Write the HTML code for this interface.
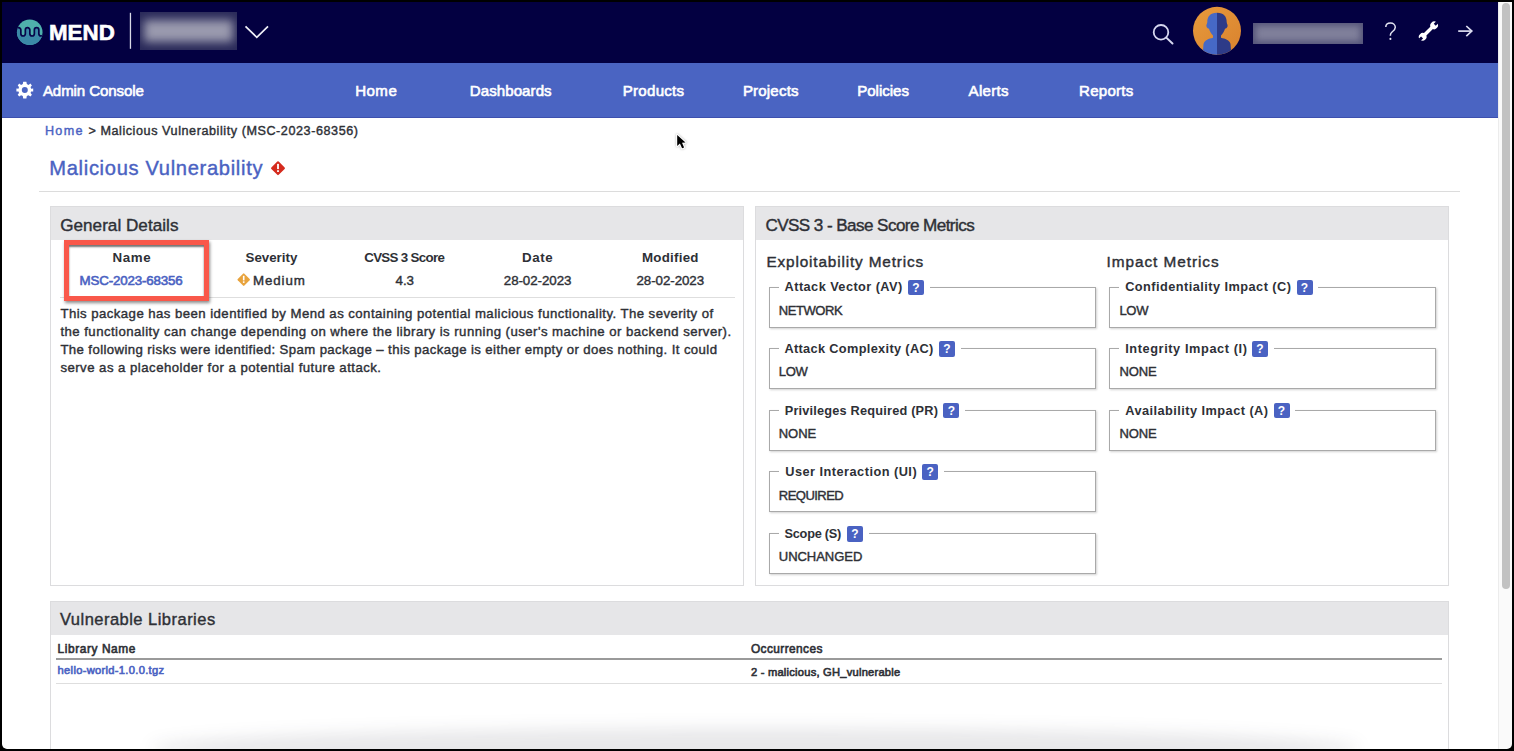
<!DOCTYPE html>
<html><head><meta charset="utf-8"><title>Malicious Vulnerability</title>
<style>
html,body{margin:0;padding:0;width:1514px;height:751px;overflow:hidden;background:#000;}
body{font-family:"Liberation Sans",sans-serif;position:relative;}
.win{position:absolute;left:2px;top:2px;width:1510px;height:747px;background:#fff;overflow:hidden;border-radius:0 0 4px 4px;}
.abs{position:absolute;}
.t{position:absolute;white-space:nowrap;line-height:1;font-family:"Liberation Sans",sans-serif;}
.hdr{position:absolute;left:0;top:0;width:1496px;height:61px;background:#030041;}
.nav{position:absolute;left:0;top:61px;width:1496px;height:55px;background:#4a64c2;box-sizing:border-box;border-bottom:1px solid #3d50ae;}
.sb{position:absolute;left:1496px;top:0;width:14px;height:747px;background:#fafafa;border-left:1px solid #ececec;box-sizing:border-box;}
.thumb{position:absolute;left:1500px;top:1px;width:8px;height:586px;background:#c2c2c2;border-radius:4px;}
.panel{position:absolute;background:#fff;border:1px solid #dcdcde;box-sizing:border-box;}
.ph{position:absolute;left:0;top:0;right:0;height:33px;background:#e6e6e8;}
.fs{position:absolute;border:1px solid #a9a9a9;box-sizing:border-box;width:327px;height:41px;box-shadow:1px 1px 2px rgba(0,0,0,0.18);background:#fff;}
.leggap{position:absolute;top:-2px;height:4px;background:#fff;}
.q{position:absolute;width:16px;height:16px;background:#4a62c2;border-radius:2px;color:#fff;font:bold 12px/16px "Liberation Sans",sans-serif;text-align:center;}
</style></head>
<body>
<div class="win">
  <div class="hdr"></div>
  <div class="nav"></div>
  <div class="sb"></div>
  <div class="thumb"></div>
</div>
<div class="abs" style="left:39px;top:190.5px;width:1421px;height:1.5px;background:#dcdcdc"></div>
<div class="panel" style="left:50px;top:206px;width:694px;height:380px"><div class="ph"></div></div>
<div class="panel" style="left:755px;top:206px;width:694px;height:380px"><div class="ph"></div></div>
<div class="panel" style="left:50px;top:600.5px;width:1399px;height:200px"><div class="ph" style="height:33px"></div></div>
<div class="abs" style="left:60px;top:296.5px;width:675px;height:1.5px;background:#dedede"></div>
<div class="fs" style="left:768.5px;top:286.6px"></div>
<div class="abs" style="left:778.6px;top:283.6px;width:151.60000000000002px;height:6px;background:#fff"></div>
<div class="q" style="left:908.0px;top:279.6px;width:16px;height:15.5px;line-height:16px">?</div>
<div class="fs" style="left:768.5px;top:348.2px"></div>
<div class="abs" style="left:778.6px;top:345.2px;width:182.29999999999995px;height:6px;background:#fff"></div>
<div class="q" style="left:939.0px;top:341.2px;width:16px;height:15.5px;line-height:16px">?</div>
<div class="fs" style="left:768.5px;top:409.8px"></div>
<div class="abs" style="left:778.6px;top:406.8px;width:186.60000000000002px;height:6px;background:#fff"></div>
<div class="q" style="left:943.3px;top:402.8px;width:16px;height:15.5px;line-height:16px">?</div>
<div class="fs" style="left:768.5px;top:471.4px"></div>
<div class="abs" style="left:778.6px;top:468.4px;width:165.0px;height:6px;background:#fff"></div>
<div class="q" style="left:922.2px;top:464.4px;width:16px;height:15.5px;line-height:16px">?</div>
<div class="fs" style="left:768.5px;top:533.0px"></div>
<div class="abs" style="left:778.6px;top:530.0px;width:90.39999999999998px;height:6px;background:#fff"></div>
<div class="q" style="left:847.0px;top:526.0px;width:16px;height:15.5px;line-height:16px">?</div>
<div class="fs" style="left:1109.0px;top:286.6px"></div>
<div class="abs" style="left:1119.4px;top:283.6px;width:199.0999999999999px;height:6px;background:#fff"></div>
<div class="q" style="left:1296.5px;top:279.6px;width:16px;height:15.5px;line-height:16px">?</div>
<div class="fs" style="left:1109.0px;top:348.2px"></div>
<div class="abs" style="left:1119.4px;top:345.2px;width:154.39999999999986px;height:6px;background:#fff"></div>
<div class="q" style="left:1252.0px;top:341.2px;width:16px;height:15.5px;line-height:16px">?</div>
<div class="fs" style="left:1109.0px;top:409.8px"></div>
<div class="abs" style="left:1119.4px;top:406.8px;width:175.79999999999995px;height:6px;background:#fff"></div>
<div class="q" style="left:1273.5px;top:402.8px;width:16px;height:15.5px;line-height:16px">?</div>
<div class="abs" style="left:56px;top:657.8px;width:1386px;height:2px;background:#9a9a9a"></div>
<div class="abs" style="left:56px;top:683px;width:1386px;height:1px;background:#dedede"></div>
<div class="abs" style="left:64px;top:240px;width:145px;height:61px;box-sizing:border-box;border:5px solid #f9584a;box-shadow:1px 2px 3px rgba(0,0,0,0.45), inset 0 2px 2px rgba(0,0,0,0.55)"></div>
<svg class="abs" style="left:670px;top:128px" width="24" height="26" viewBox="0 0 24 26"><path d="M7.2 7 L7.2 18 L9.9 15.5 L12.1 20.3 L14.1 19.4 L12 14.8 L15.5 14.6 Z" fill="#000" stroke="#fff" stroke-width="2.2" stroke-linejoin="round" paint-order="stroke" style="filter:drop-shadow(0 0.6px 0.8px rgba(0,0,0,0.3))"/></svg>
<!-- shapes in page coordinates -->
<svg class="abs" style="left:0;top:0" width="1514" height="751" viewBox="0 0 1514 751">
  <!-- mend logo -->
  <defs>
    <linearGradient id="lg" x1="0" y1="0" x2="0" y2="1">
      <stop offset="0" stop-color="#52b7ae"/><stop offset="1" stop-color="#3a86a6"/>
    </linearGradient>
    <linearGradient id="av" x1="0" y1="0" x2="1" y2="1">
      <stop offset="0" stop-color="#e79a3c"/><stop offset="1" stop-color="#d9822e"/>
    </linearGradient>
    <clipPath id="avc"><circle cx="1217" cy="30.8" r="24"/></clipPath>
  </defs>
  <clipPath id="lc"><circle cx="29.75" cy="32.2" r="12.8"/></clipPath>
  <g clip-path="url(#lc)">
    <rect x="16" y="19" width="28" height="28" fill="#4fb1ac"/>
    <path d="M16.35 29.95 A2.25 2.25 0 0 1 20.85 29.95 L20.85 33.75 A2.25 2.25 0 0 0 25.35 33.75 L25.35 29.95 A2.25 2.25 0 0 1 29.85 29.95 L29.85 33.75 A2.25 2.25 0 0 0 34.35 33.75 L34.35 29.95 A2.25 2.25 0 0 1 38.85 29.95 L38.85 33.75 A2.25 2.25 0 0 0 43.35 33.75 L44 47 L16 47 Z" fill="#3b89a7"/>
    <path d="M16.35 29.95 A2.25 2.25 0 0 1 20.85 29.95 L20.85 33.75 A2.25 2.25 0 0 0 25.35 33.75 L25.35 29.95 A2.25 2.25 0 0 1 29.85 29.95 L29.85 33.75 A2.25 2.25 0 0 0 34.35 33.75 L34.35 29.95 A2.25 2.25 0 0 1 38.85 29.95 L38.85 33.75 A2.25 2.25 0 0 0 43.35 33.75" fill="none" stroke="#07054a" stroke-width="1.7"/>
  </g>
  <text x="48.9" y="39.8" font-family="Liberation Sans" font-weight="700" font-size="22.3" fill="#fff" stroke="#fff" stroke-width="0.6" letter-spacing="0.1">MEND</text>
  <rect x="129.8" y="12.8" width="1.3" height="36" fill="#d8d8e6"/>
  <!-- blurred org name -->
  
  <polyline points="245.5,26.3 256.8,37.3 268,26.3" fill="none" stroke="#f0f0f8" stroke-width="1.7"/>
  <!-- search -->
  <circle cx="1161" cy="32.3" r="7.3" fill="none" stroke="#d6d6ef" stroke-width="1.8"/>
  <line x1="1166.3" y1="37.6" x2="1172.5" y2="43.5" stroke="#d6d6ef" stroke-width="2" stroke-linecap="round"/>
  <!-- avatar -->
  <circle cx="1217" cy="30.8" r="24" fill="url(#av)"/>
  <g clip-path="url(#avc)">
    <path d="M1217 12.8 C1210 12.8 1207.3 17 1207.3 22 C1207.3 24 1206 24.5 1206.5 26.5 C1207 28.3 1208.3 28.3 1209 28.8 C1210 32 1211.5 34 1213 35.5 L1213 37.8 C1209 38.8 1204.5 40 1203.5 44 L1202.5 56 L1217 56 Z" fill="#4669c6"/>
    <path d="M1217 12.8 C1224 12.8 1226.7 17 1226.7 22 C1226.7 24 1228 24.5 1227.5 26.5 C1227 28.3 1225.7 28.3 1225 28.8 C1224 32 1222.5 34 1221 35.5 L1221 37.8 C1225 38.8 1229.5 40 1230.5 44 L1231.5 56 L1217 56 Z" fill="#2d3b88"/>
  </g>
  
  <path d="M1385.8 27 C1385.8 24.4 1388 23 1390.5 23 C1393.2 23 1395.3 24.8 1395.3 27.3 C1395.3 29.8 1393.5 30.9 1392 32 C1390.9 32.9 1390.4 33.6 1390.4 35 L1390.4 35.8" fill="none" stroke="#e4e4f2" stroke-width="1.5"/><circle cx="1390.4" cy="38.9" r="1.05" fill="#e4e4f2"/>
  <!-- wrench -->
  <g transform="translate(1428.4 31.1) rotate(-45) scale(0.88)">
    <rect x="-8" y="-2" width="16" height="4" fill="#fff"/>
    <circle cx="-9.2" cy="0" r="4.3" fill="#fff"/>
    <circle cx="9.2" cy="0" r="4.3" fill="#fff"/>
    <path d="M-14 -1.6 L-10.2 -1.6 L-10.2 1.6 L-14 1.6 Z" fill="#030041"/>
    <path d="M14 -1.6 L10.2 -1.6 L10.2 1.6 L14 1.6 Z" fill="#030041"/>
  </g>
  <!-- arrow -->
  <line x1="1458.2" y1="31.1" x2="1471.5" y2="31.1" stroke="#dcdcf0" stroke-width="1.7"/>
  <polyline points="1466.3,26 1471.8,31.1 1466.3,36.2" fill="none" stroke="#dcdcf0" stroke-width="1.7"/>
  <!-- gear -->
  <g transform="translate(24.8 90.1)" fill="#fff">
    <path id="gear" d="M-1.6 -8.3 L1.6 -8.3 L2 -6 L3.7 -5.2 L5.6 -6.5 L7.1 -4.6 L5.8 -3 L6.3 -1.3 L8.4 -1.5 L8.4 1.5 L6.3 1.3 L5.8 3 L7.1 4.6 L5.6 6.5 L3.7 5.2 L2 6 L1.6 8.3 L-1.6 8.3 L-2 6 L-3.7 5.2 L-5.6 6.5 L-7.1 4.6 L-5.8 3 L-6.3 1.3 L-8.4 1.5 L-8.4 -1.5 L-6.3 -1.3 L-5.8 -3 L-7.1 -4.6 L-5.6 -6.5 L-3.7 -5.2 L-2 -6 Z M0 -3 A3 3 0 1 0 0 3 A3 3 0 1 0 0 -3 Z" fill-rule="evenodd"/>
  </g>
  <!-- title diamond -->
  <g transform="translate(278 168.2)">
    <rect x="-5.2" y="-5.2" width="10.4" height="10.4" fill="#d52b1e" transform="rotate(45)" rx="1"/>
    <rect x="-0.9" y="-4.3" width="1.8" height="5.2" fill="#fff"/>
    <rect x="-0.9" y="2" width="1.8" height="1.8" fill="#fff"/>
  </g>
  <!-- medium diamond -->
  <g transform="translate(243.7 279.6)">
    <rect x="-4.7" y="-4.7" width="9.4" height="9.4" fill="#e8a33d" transform="rotate(45)" rx="1"/>
    <rect x="-0.8" y="-3.8" width="1.6" height="4.6" fill="#fff"/>
    <rect x="-0.8" y="1.7" width="1.6" height="1.6" fill="#fff"/>
  </g>
</svg>
<div class="t" style="left:42.9px;top:83.0px;font-size:15.07px;letter-spacing:-0.089px;font-weight:400;color:#ffffff;-webkit-text-stroke:0.6px #ffffff">Admin Console</div>
<div class="t" style="left:355.2px;top:83.0px;font-size:15.07px;letter-spacing:0.466px;font-weight:400;color:#ffffff;-webkit-text-stroke:0.6px #ffffff">Home</div>
<div class="t" style="left:469.8px;top:83.0px;font-size:15.07px;letter-spacing:0.068px;font-weight:400;color:#ffffff;-webkit-text-stroke:0.6px #ffffff">Dashboards</div>
<div class="t" style="left:622.7px;top:83.0px;font-size:15.07px;letter-spacing:0.284px;font-weight:400;color:#ffffff;-webkit-text-stroke:0.6px #ffffff">Products</div>
<div class="t" style="left:742.9px;top:83.0px;font-size:15.07px;letter-spacing:0.174px;font-weight:400;color:#ffffff;-webkit-text-stroke:0.6px #ffffff">Projects</div>
<div class="t" style="left:857.2px;top:83.0px;font-size:15.07px;letter-spacing:-0.024px;font-weight:400;color:#ffffff;-webkit-text-stroke:0.6px #ffffff">Policies</div>
<div class="t" style="left:968.6px;top:83.0px;font-size:15.07px;letter-spacing:0.286px;font-weight:400;color:#ffffff;-webkit-text-stroke:0.6px #ffffff">Alerts</div>
<div class="t" style="left:1079.0px;top:83.0px;font-size:15.07px;letter-spacing:0.265px;font-weight:400;color:#ffffff;-webkit-text-stroke:0.6px #ffffff">Reports</div>
<div class="t" style="left:44.9px;top:125.3px;font-size:12.61px;letter-spacing:1.337px;font-weight:400;color:#4a62c2;-webkit-text-stroke:0.4px #4a62c2">Home</div>
<div class="t" style="left:88.6px;top:125.3px;font-size:12.61px;letter-spacing:0.000px;font-weight:400;color:#2e3036;-webkit-text-stroke:0.4px #2e3036">&gt;</div>
<div class="t" style="left:100.4px;top:125.3px;font-size:12.61px;letter-spacing:0.561px;font-weight:400;color:#2e3036;-webkit-text-stroke:0.4px #2e3036">Malicious Vulnerability (MSC-2023-68356)</div>
<div class="t" style="left:49.3px;top:158.2px;font-size:20.14px;letter-spacing:0.673px;font-weight:400;color:#4a62c2;-webkit-text-stroke:0.4px #4a62c2">Malicious Vulnerability</div>
<div class="t" style="left:60.2px;top:216.5px;font-size:17.10px;letter-spacing:0.031px;font-weight:400;color:#2e3036;-webkit-text-stroke:0.4px #2e3036">General Details</div>
<div class="t" style="left:765.4px;top:216.7px;font-size:17.10px;letter-spacing:-0.571px;font-weight:400;color:#2e3036;-webkit-text-stroke:0.4px #2e3036">CVSS 3 - Base Score Metrics</div>
<div class="t" style="left:112.4px;top:251.4px;font-size:13.33px;letter-spacing:0.637px;font-weight:700;color:#2e3036;-webkit-text-stroke:0.0px #2e3036">Name</div>
<div class="t" style="left:245.5px;top:251.4px;font-size:13.33px;letter-spacing:-0.008px;font-weight:700;color:#2e3036;-webkit-text-stroke:0.0px #2e3036">Severity</div>
<div class="t" style="left:364.2px;top:251.4px;font-size:13.33px;letter-spacing:-0.677px;font-weight:700;color:#2e3036;-webkit-text-stroke:0.0px #2e3036">CVSS 3 Score</div>
<div class="t" style="left:522.0px;top:251.4px;font-size:13.33px;letter-spacing:0.575px;font-weight:700;color:#2e3036;-webkit-text-stroke:0.0px #2e3036">Date</div>
<div class="t" style="left:641.9px;top:251.4px;font-size:13.33px;letter-spacing:0.251px;font-weight:700;color:#2e3036;-webkit-text-stroke:0.0px #2e3036">Modified</div>
<div class="t" style="left:79.6px;top:274.1px;font-size:13.33px;letter-spacing:-0.161px;font-weight:400;color:#4a62c2;-webkit-text-stroke:0.6px #4a62c2">MSC-2023-68356</div>
<div class="t" style="left:253.0px;top:274.1px;font-size:13.33px;letter-spacing:0.880px;font-weight:400;color:#2e3036;-webkit-text-stroke:0.4px #2e3036">Medium</div>
<div class="t" style="left:395.6px;top:274.1px;font-size:13.33px;letter-spacing:-0.058px;font-weight:400;color:#2e3036;-webkit-text-stroke:0.4px #2e3036">4.3</div>
<div class="t" style="left:503.8px;top:274.1px;font-size:13.33px;letter-spacing:-0.063px;font-weight:400;color:#2e3036;-webkit-text-stroke:0.4px #2e3036">28-02-2023</div>
<div class="t" style="left:636.5px;top:274.1px;font-size:13.33px;letter-spacing:-0.063px;font-weight:400;color:#2e3036;-webkit-text-stroke:0.4px #2e3036">28-02-2023</div>
<div class="t" style="left:60.4px;top:307.3px;font-size:13.19px;letter-spacing:0.445px;font-weight:400;color:#2e3036;-webkit-text-stroke:0.4px #2e3036">This package has been identified by Mend as containing potential malicious functionality. The severity of</div>
<div class="t" style="left:60.4px;top:325.3px;font-size:13.19px;letter-spacing:0.457px;font-weight:400;color:#2e3036;-webkit-text-stroke:0.4px #2e3036">the functionality can change depending on where the library is running (user's machine or backend server).</div>
<div class="t" style="left:60.4px;top:343.1px;font-size:13.19px;letter-spacing:0.396px;font-weight:400;color:#2e3036;-webkit-text-stroke:0.4px #2e3036">The following risks were identified: Spam package – this package is either empty or does nothing. It could</div>
<div class="t" style="left:60.4px;top:360.7px;font-size:13.19px;letter-spacing:0.470px;font-weight:400;color:#2e3036;-webkit-text-stroke:0.4px #2e3036">serve as a placeholder for a potential future attack.</div>
<div class="t" style="left:766.4px;top:254.1px;font-size:15.36px;letter-spacing:0.845px;font-weight:400;color:#2e3036;-webkit-text-stroke:0.4px #2e3036">Exploitability Metrics</div>
<div class="t" style="left:1106.6px;top:254.1px;font-size:15.36px;letter-spacing:0.933px;font-weight:400;color:#2e3036;-webkit-text-stroke:0.4px #2e3036">Impact Metrics</div>
<div class="t" style="left:784.6px;top:281.3px;font-size:12.75px;letter-spacing:0.433px;font-weight:700;color:#2e3036;-webkit-text-stroke:0.0px #2e3036">Attack Vector (AV)</div>
<div class="t" style="left:778.8px;top:303.8px;font-size:13.04px;letter-spacing:-0.468px;font-weight:400;color:#2e3036;-webkit-text-stroke:0.4px #2e3036">NETWORK</div>
<div class="t" style="left:784.4px;top:342.9px;font-size:12.75px;letter-spacing:0.341px;font-weight:700;color:#2e3036;-webkit-text-stroke:0.0px #2e3036">Attack Complexity (AC)</div>
<div class="t" style="left:778.8px;top:365.4px;font-size:13.04px;letter-spacing:-0.292px;font-weight:400;color:#2e3036;-webkit-text-stroke:0.4px #2e3036">LOW</div>
<div class="t" style="left:784.7px;top:404.5px;font-size:12.75px;letter-spacing:0.194px;font-weight:700;color:#2e3036;-webkit-text-stroke:0.0px #2e3036">Privileges Required (PR)</div>
<div class="t" style="left:778.8px;top:427.0px;font-size:13.04px;letter-spacing:-0.086px;font-weight:400;color:#2e3036;-webkit-text-stroke:0.4px #2e3036">NONE</div>
<div class="t" style="left:785.2px;top:466.1px;font-size:12.75px;letter-spacing:0.480px;font-weight:700;color:#2e3036;-webkit-text-stroke:0.0px #2e3036">User Interaction (UI)</div>
<div class="t" style="left:778.8px;top:488.6px;font-size:13.04px;letter-spacing:-0.553px;font-weight:400;color:#2e3036;-webkit-text-stroke:0.4px #2e3036">REQUIRED</div>
<div class="t" style="left:784.5px;top:527.7px;font-size:12.75px;letter-spacing:-0.244px;font-weight:700;color:#2e3036;-webkit-text-stroke:0.0px #2e3036">Scope (S)</div>
<div class="t" style="left:778.8px;top:550.2px;font-size:13.04px;letter-spacing:-0.059px;font-weight:400;color:#2e3036;-webkit-text-stroke:0.4px #2e3036">UNCHANGED</div>
<div class="t" style="left:1125.2px;top:281.3px;font-size:12.75px;letter-spacing:0.453px;font-weight:700;color:#2e3036;-webkit-text-stroke:0.0px #2e3036">Confidentiality Impact (C)</div>
<div class="t" style="left:1119.4px;top:303.8px;font-size:13.04px;letter-spacing:-0.292px;font-weight:400;color:#2e3036;-webkit-text-stroke:0.4px #2e3036">LOW</div>
<div class="t" style="left:1125.2px;top:342.9px;font-size:12.75px;letter-spacing:0.591px;font-weight:700;color:#2e3036;-webkit-text-stroke:0.0px #2e3036">Integrity Impact (I)</div>
<div class="t" style="left:1119.4px;top:365.4px;font-size:13.04px;letter-spacing:-0.086px;font-weight:400;color:#2e3036;-webkit-text-stroke:0.4px #2e3036">NONE</div>
<div class="t" style="left:1125.2px;top:404.5px;font-size:12.75px;letter-spacing:0.460px;font-weight:700;color:#2e3036;-webkit-text-stroke:0.0px #2e3036">Availability Impact (A)</div>
<div class="t" style="left:1119.4px;top:427.0px;font-size:13.04px;letter-spacing:-0.086px;font-weight:400;color:#2e3036;-webkit-text-stroke:0.4px #2e3036">NONE</div>
<div class="t" style="left:60.0px;top:611.5px;font-size:16.52px;letter-spacing:0.467px;font-weight:400;color:#2e3036;-webkit-text-stroke:0.4px #2e3036">Vulnerable Libraries</div>
<div class="t" style="left:57.6px;top:643.7px;font-size:11.88px;letter-spacing:0.594px;font-weight:400;color:#2e3036;-webkit-text-stroke:0.6px #2e3036">Library Name</div>
<div class="t" style="left:750.9px;top:643.8px;font-size:11.88px;letter-spacing:0.422px;font-weight:400;color:#2e3036;-webkit-text-stroke:0.6px #2e3036">Occurrences</div>
<div class="t" style="left:57.6px;top:665.1px;font-size:11.16px;letter-spacing:0.298px;font-weight:400;color:#4a62c2;-webkit-text-stroke:0.6px #4a62c2">hello-world-1.0.0.tgz</div>
<div class="t" style="left:750.9px;top:667.2px;font-size:11.16px;letter-spacing:0.225px;font-weight:400;color:#2e3036;-webkit-text-stroke:0.6px #2e3036">2 - malicious, GH_vulnerable</div>
<div class="abs" style="left:140px;top:12px;width:97px;height:38px;overflow:hidden;background:#2a2a5a"><div class="abs" style="left:4px;top:8px;width:89px;height:22px;background:#9a9aae;filter:blur(5px)"></div></div>
<div class="abs" style="left:1253px;top:23px;width:110px;height:21px;overflow:hidden;background:#55557a"><div class="abs" style="left:3px;top:3px;width:104px;height:15px;background:#80809a;filter:blur(3px)"></div></div>
<div class="abs" style="left:150px;top:728px;width:1210px;height:40px;background:rgba(30,30,50,0.10);border-radius:50%;filter:blur(8px)"></div>
<div class="abs" style="left:2px;top:2px;width:1510px;height:747px;border-radius:0 0 5px 5px;box-shadow:0 0 0 12px #000;pointer-events:none"></div>
</body></html>
